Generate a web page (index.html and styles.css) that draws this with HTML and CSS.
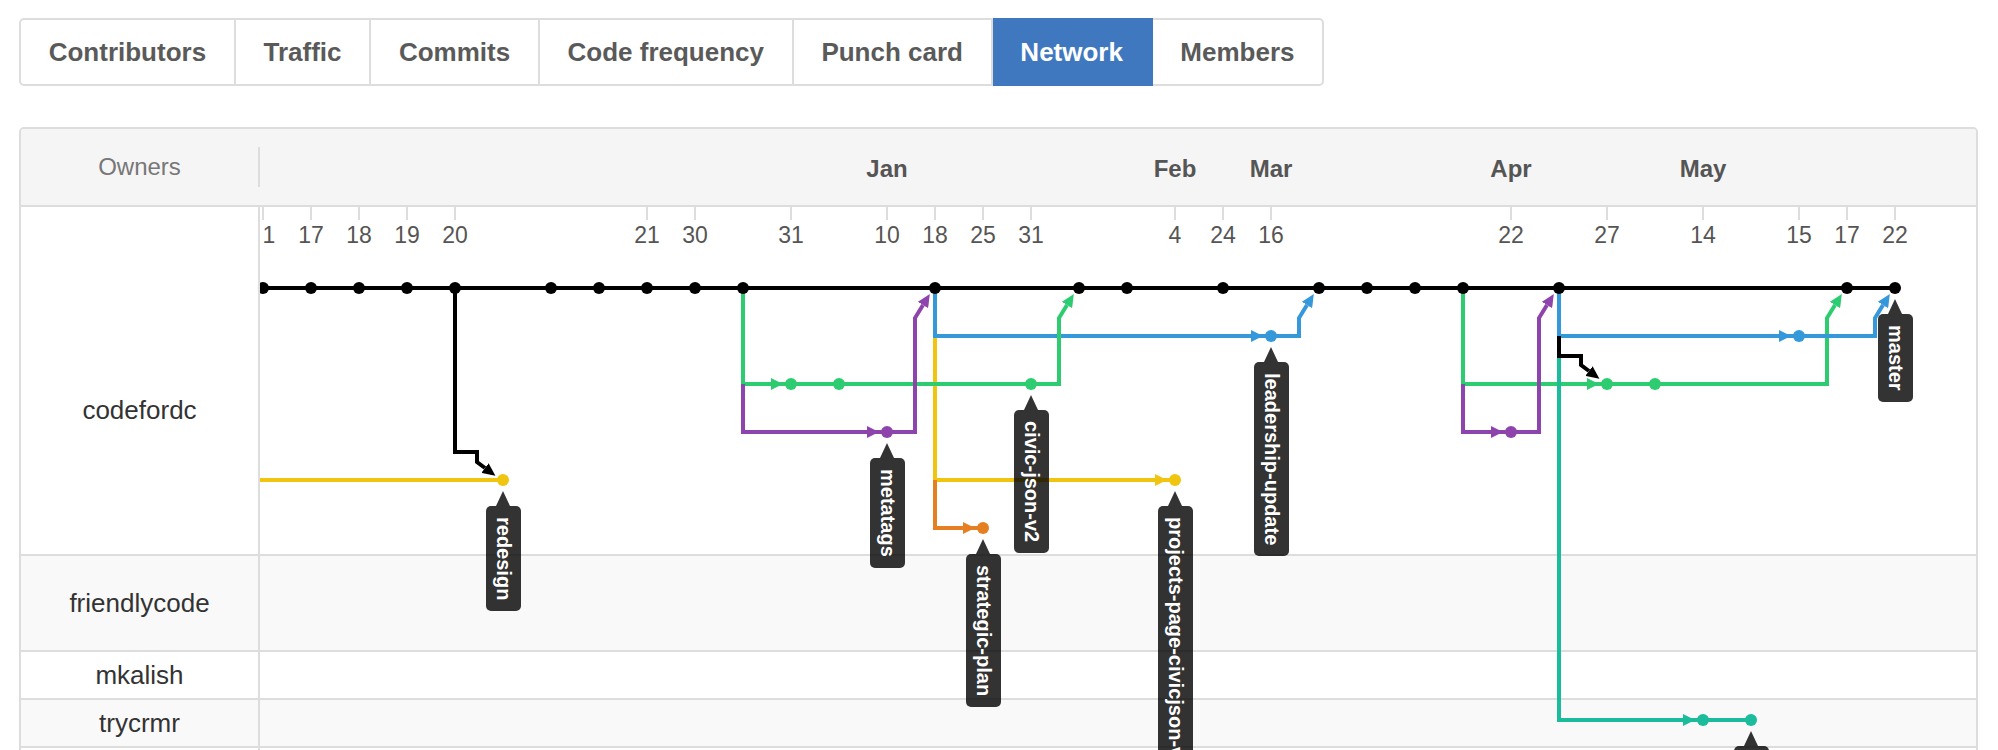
FILE: index.html
```html
<!DOCTYPE html>
<html lang="en">
<head>
<meta charset="utf-8">
<title>Network graph</title>
<link rel="stylesheet" href="styles.css">
</head>
<body>
<div class="page">
  <nav class="tabs">
    <a class="tab">Contributors</a>
    <a class="tab">Traffic</a>
    <a class="tab">Commits</a>
    <a class="tab">Code frequency</a>
    <a class="tab">Punch card</a>
    <a class="tab active">Network</a>
    <a class="tab">Members</a>
  </nav>

  <section class="panel">
    <div class="panel-head">
      <div class="owners-head">Owners</div>
    </div>
    <div class="rows">
      <div class="row row-main"><div class="owner">codefordc</div></div>
      <div class="row row-mid alt"><div class="owner">friendlycode</div></div>
      <div class="row row-sm"><div class="owner">mkalish</div></div>
      <div class="row row-sm alt"><div class="owner">trycrmr</div></div>
      <div class="row row-sm"><div class="owner"></div></div>
    </div>

    <svg class="graph" viewBox="260 129 1716 621" width="1716" height="621" xmlns="http://www.w3.org/2000/svg">
      <defs>
        <marker id="a-black" viewBox="0 0 13 12" refX="0" refY="6" markerWidth="13" markerHeight="12" markerUnits="userSpaceOnUse" orient="auto"><path d="M0 0L13 6L0 12Z" fill="#000"/></marker>
        <marker id="a-green" viewBox="0 0 13 12" refX="0" refY="6" markerWidth="13" markerHeight="12" markerUnits="userSpaceOnUse" orient="auto"><path d="M0 0L13 6L0 12Z" fill="#2ecc71"/></marker>
        <marker id="a-purple" viewBox="0 0 13 12" refX="0" refY="6" markerWidth="13" markerHeight="12" markerUnits="userSpaceOnUse" orient="auto"><path d="M0 0L13 6L0 12Z" fill="#8e44ad"/></marker>
        <marker id="a-blue" viewBox="0 0 13 12" refX="0" refY="6" markerWidth="13" markerHeight="12" markerUnits="userSpaceOnUse" orient="auto"><path d="M0 0L13 6L0 12Z" fill="#3498db"/></marker>
      </defs>

      <g class="months">
        <text x="887" y="177">Jan</text>
        <text x="1175" y="177">Feb</text>
        <text x="1271" y="177">Mar</text>
        <text x="1511" y="177">Apr</text>
        <text x="1703" y="177">May</text>
      </g>

      <path class="ticks" d="M263 207V220M311 207V220M359 207V220M407 207V220M455 207V220M647 207V220M695 207V220M791 207V220M887 207V220M935 207V220M983 207V220M1031 207V220M1175 207V220M1223 207V220M1271 207V220M1511 207V220M1607 207V220M1703 207V220M1799 207V220M1847 207V220M1895 207V220"/>

      <g class="days">
        <text x="269" y="243">1</text>
        <text x="311" y="243">17</text>
        <text x="359" y="243">18</text>
        <text x="407" y="243">19</text>
        <text x="455" y="243">20</text>
        <text x="647" y="243">21</text>
        <text x="695" y="243">30</text>
        <text x="791" y="243">31</text>
        <text x="887" y="243">10</text>
        <text x="935" y="243">18</text>
        <text x="983" y="243">25</text>
        <text x="1031" y="243">31</text>
        <text x="1175" y="243">4</text>
        <text x="1223" y="243">24</text>
        <text x="1271" y="243">16</text>
        <text x="1511" y="243">22</text>
        <text x="1607" y="243">27</text>
        <text x="1703" y="243">14</text>
        <text x="1799" y="243">15</text>
        <text x="1847" y="243">17</text>
        <text x="1895" y="243">22</text>
      </g>

      <g class="lines">
        <!-- projects-page-civicjson-v2 -->
        <path class="yellow" d="M935 336V480H1175"/>
        <path class="fill-yellow" d="M1155 474L1167 480L1155 486Z"/>
        <!-- strategic-plan -->
        <path class="orange" d="M935 480V528H983"/>
        <path class="fill-orange" d="M963 522L975 528L963 534Z"/>
        <!-- leadership-update -->
        <path class="blue" d="M935 288V336H1299V318L1307 305" marker-end="url(#a-blue)"/>
        <path class="fill-blue" d="M1251 330L1263 336L1251 342Z"/>
        <!-- civic-json-v2 -->
        <path class="green" d="M743 288V384H1059V318L1067 305" marker-end="url(#a-green)"/>
        <path class="fill-green" d="M771 378L783 384L771 390Z"/>
        <!-- metatags -->
        <path class="purple" d="M743 384V432H915V318L923 305" marker-end="url(#a-purple)"/>
        <path class="fill-purple" d="M867 426L879 432L867 438Z"/>
        <!-- redesign -->
        <path class="yellow" d="M258 480H503"/>
        <path class="black" d="M455 288V452H477V462L485 468" marker-end="url(#a-black)"/>
        <!-- right side -->
        <path class="green" d="M1463 288V384H1827V318L1835 305" marker-end="url(#a-green)"/>
        <path class="fill-green" d="M1587 378L1599 384L1587 390Z"/>
        <path class="purple" d="M1463 384V432H1539V318L1547 305" marker-end="url(#a-purple)"/>
        <path class="fill-purple" d="M1491 426L1503 432L1491 438Z"/>
        <path class="blue" d="M1559 288V336H1875V318L1883 305" marker-end="url(#a-blue)"/>
        <path class="fill-blue" d="M1779 330L1791 336L1779 342Z"/>
        <path class="teal" d="M1559 356V720H1751"/>
        <path class="fill-teal" d="M1683 714L1695 720L1683 726Z"/>
        <path class="black" d="M1559 336V356H1581V365L1589 371" marker-end="url(#a-black)"/>
        <!-- master -->
        <path class="black" d="M258 288H1895"/>
      </g>

      <g class="dots">
        <g class="fill-black">
          <circle cx="263" cy="288" r="6"/><circle cx="311" cy="288" r="6"/><circle cx="359" cy="288" r="6"/>
          <circle cx="407" cy="288" r="6"/><circle cx="455" cy="288" r="6"/><circle cx="551" cy="288" r="6"/>
          <circle cx="599" cy="288" r="6"/><circle cx="647" cy="288" r="6"/><circle cx="695" cy="288" r="6"/>
          <circle cx="743" cy="288" r="6"/><circle cx="935" cy="288" r="6"/><circle cx="1079" cy="288" r="6"/>
          <circle cx="1127" cy="288" r="6"/><circle cx="1223" cy="288" r="6"/><circle cx="1319" cy="288" r="6"/>
          <circle cx="1367" cy="288" r="6"/><circle cx="1415" cy="288" r="6"/><circle cx="1463" cy="288" r="6"/>
          <circle cx="1559" cy="288" r="6"/><circle cx="1847" cy="288" r="6"/><circle cx="1895" cy="288" r="6"/>
        </g>
        <g class="fill-yellow"><circle cx="503" cy="480" r="6"/><circle cx="1175" cy="480" r="6"/></g>
        <g class="fill-green">
          <circle cx="791" cy="384" r="6"/><circle cx="839" cy="384" r="6"/><circle cx="1031" cy="384" r="6"/>
          <circle cx="1607" cy="384" r="6"/><circle cx="1655" cy="384" r="6"/>
        </g>
        <g class="fill-purple"><circle cx="887" cy="432" r="6"/><circle cx="1511" cy="432" r="6"/></g>
        <g class="fill-blue"><circle cx="1271" cy="336" r="6"/><circle cx="1799" cy="336" r="6"/></g>
        <g class="fill-orange"><circle cx="983" cy="528" r="6"/></g>
        <g class="fill-teal"><circle cx="1703" cy="720" r="6"/><circle cx="1751" cy="720" r="6"/></g>
      </g>
    </svg>

    <div class="tag" style="left:464.5px;top:377px">redesign</div>
    <div class="tag" style="left:848.5px;top:329px">metatags</div>
    <div class="tag" style="left:992.5px;top:281px">civic-json-v2</div>
    <div class="tag" style="left:944.5px;top:425px">strategic-plan</div>
    <div class="tag" style="left:1136.5px;top:377px">projects-page-civicjson-v2</div>
    <div class="tag" style="left:1232.5px;top:233px">leadership-update</div>
    <div class="tag" style="left:1856.5px;top:185px">master</div>
    <div class="tag tag-stub" style="left:1712.5px;top:617px"></div>
  </section>
</div>
</body>
</html>
```

FILE: styles.css
```css
* {
  box-sizing: border-box;
}

body {
  margin: 0;
  background: #fff;
  font-family: "Liberation Sans", Arial, Helvetica, sans-serif;
}

.page {
  padding: 18px 20px 0 19px;
}

/* ---------- tabs ---------- */
.tabs {
  display: flex;
  width: max-content;
}

.tab {
  display: block;
  height: 68px;
  padding: 0 27.7px;
  line-height: 64px;
  font-size: 26px;
  font-weight: bold;
  color: #5a5a5a;
  border: 2px solid #ddd;
  border-left-width: 0;
  white-space: nowrap;
  cursor: pointer;
}

.tab:first-child {
  border-left-width: 2px;
  border-radius: 5px 0 0 5px;
}

.tab:last-child {
  border-radius: 0 5px 5px 0;
}

.tab.active {
  background: #4078c0;
  border-color: #4078c0;
  color: #fff;
}

/* ---------- panel ---------- */
.panel {
  position: relative;
  margin-top: 41px;
  border: 2px solid #ddd;
  border-radius: 5px;
  overflow: hidden;
}

.panel-head {
  display: flex;
  align-items: center;
  height: 78px;
  background: #f5f5f5;
  border-bottom: 2px solid #ddd;
}

.owners-head {
  display: flex;
  align-items: center;
  justify-content: center;
  width: 239px;
  height: 40px;
  border-right: 2px solid #ddd;
  font-size: 24px;
  color: #777;
}

.row {
  display: flex;
  border-bottom: 2px solid #ddd;
  background: #fff;
}

.row.alt {
  background: #f9f9f9;
}

.row-main {
  height: 349px;
}

.row-mid {
  height: 96px;
}

.row-sm {
  height: 48px;
}

.owner {
  display: flex;
  align-items: center;
  justify-content: center;
  width: 239px;
  border-right: 2px solid #ddd;
  font-size: 26px;
  color: #333;
}

.row-main .owner {
  padding-top: 59px;
}

/* ---------- graph ---------- */
.graph {
  position: absolute;
  left: 239px;
  top: 0;
  display: block;
  pointer-events: none;
}

.months text {
  font-family: "Liberation Sans", Arial, sans-serif;
  font-size: 24px;
  font-weight: bold;
  fill: #555;
  text-anchor: middle;
}

.days text {
  font-family: "Liberation Sans", Arial, sans-serif;
  font-size: 23px;
  fill: #555;
  text-anchor: middle;
}

.ticks {
  stroke: #ddd;
  stroke-width: 2;
  fill: none;
}

.lines path {
  fill: none;
  stroke-width: 4;
}

.lines .black { stroke: #000; }
.lines .green { stroke: #2ecc71; }
.lines .purple { stroke: #8e44ad; }
.lines .blue { stroke: #3498db; }
.lines .yellow { stroke: #f1c40f; }
.lines .orange { stroke: #e67e22; }
.lines .teal { stroke: #1abc9c; }

.lines path[class^="fill-"] {
  stroke: none;
}

.fill-black { fill: #000; }
.lines .fill-green, .fill-green { fill: #2ecc71; }
.lines .fill-purple, .fill-purple { fill: #8e44ad; }
.lines .fill-blue, .fill-blue { fill: #3498db; }
.lines .fill-yellow, .fill-yellow { fill: #f1c40f; }
.lines .fill-orange, .fill-orange { fill: #e67e22; }
.lines .fill-teal, .fill-teal { fill: #1abc9c; }

/* ---------- branch labels ---------- */
.tag {
  position: absolute;
  width: 35px;
  padding: 11px 0;
  background: rgba(0, 0, 0, 0.8);
  border-radius: 5px;
  color: #fff;
  font-size: 20px;
  font-weight: bold;
  line-height: 35px;
  writing-mode: vertical-rl;
  white-space: nowrap;
}

.tag-stub {
  height: 80px;
}

.tag::before {
  content: "";
  position: absolute;
  top: -15px;
  left: 50%;
  margin-left: -7px;
  border-left: 7px solid transparent;
  border-right: 7px solid transparent;
  border-bottom: 15px solid rgba(0, 0, 0, 0.8);
}
```
